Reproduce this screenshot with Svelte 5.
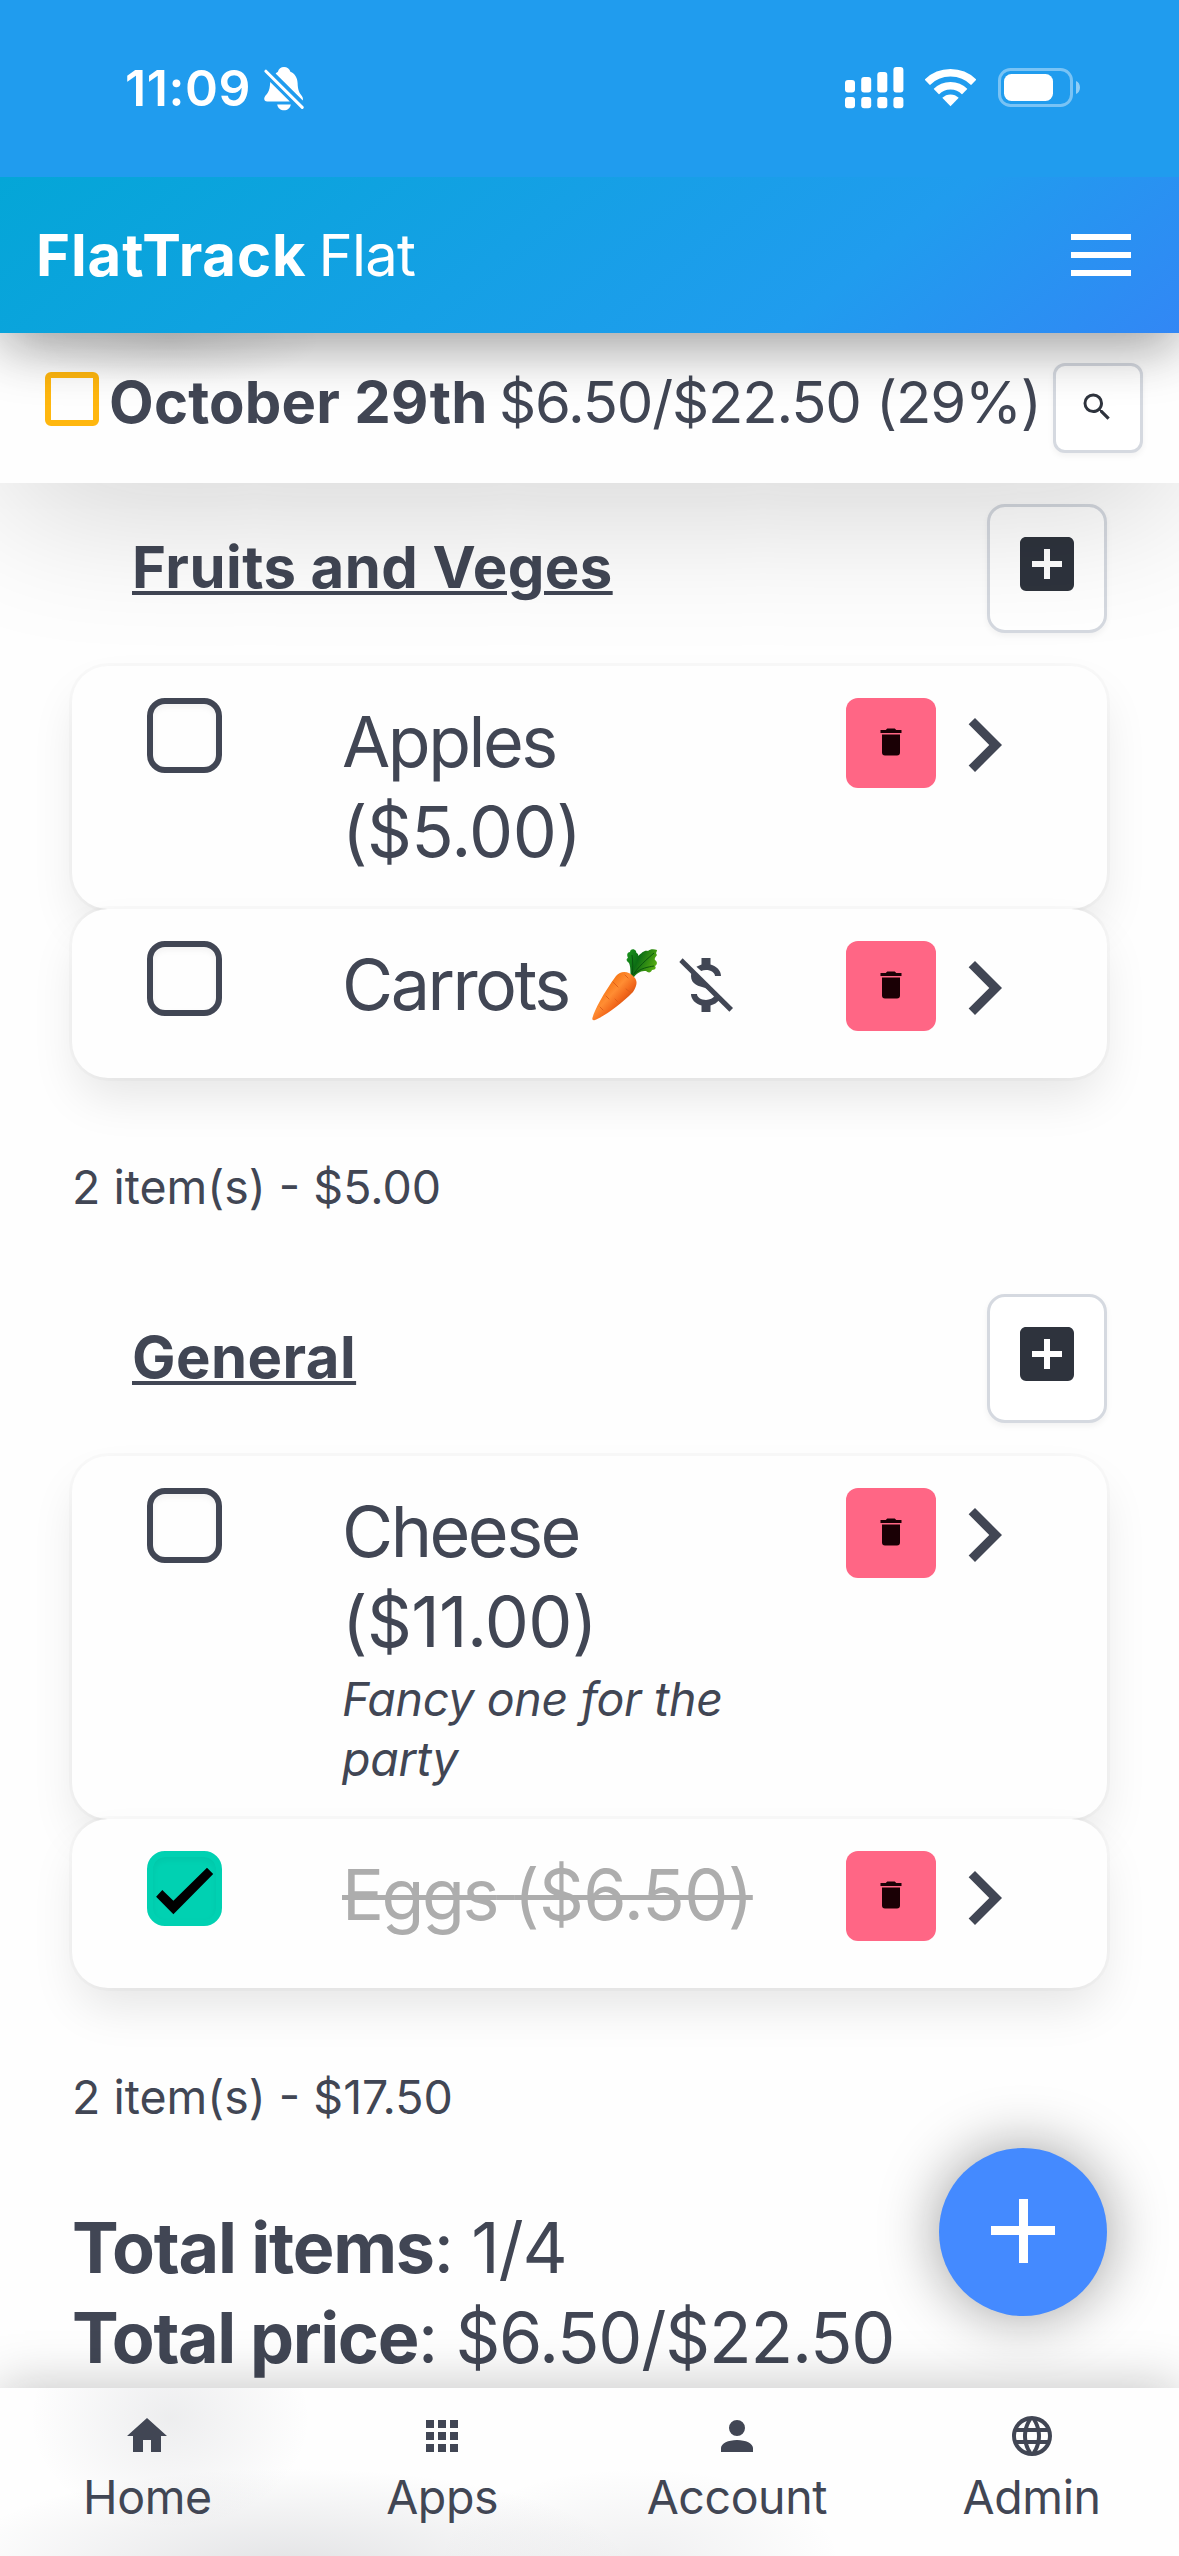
<script>
  const sections = [
    {
      name: 'Fruits and Veges',
      total: '2 item(s) - $5.00',
      items: [
        { name: 'Apples', price: '($5.00)' },
        { name: 'Carrots', carrot: true, unpriced: true }
      ]
    },
    {
      name: 'General',
      total: '2 item(s) - $17.50',
      items: [
        { name: 'Cheese', price: '($11.00)', note: 'Fancy one for the party' },
        { name: 'Eggs', price: '($6.50)', done: true }
      ]
    }
  ];

  const tabs = [
    { label: 'Home', icon: 'M10,20V14H14V20H19V12H22L12,3L2,12H5V20H10Z' },
    {
      label: 'Apps',
      icon: 'M16,20H20V16H16M16,14H20V10H16M10,8H14V4H10M16,8H20V4H16M10,14H14V10H10M4,14H8V10H4M4,20H8V16H4M10,20H14V16H10M4,8H8V4H4V8Z'
    },
    {
      label: 'Account',
      icon: 'M12,4A4,4 0 0,1 16,8A4,4 0 0,1 12,12A4,4 0 0,1 8,8A4,4 0 0,1 12,4M12,14C16.42,14 20,15.79 20,18V20H4V18C4,15.79 7.58,14 12,14Z'
    },
    {
      label: 'Admin',
      icon: 'M16.36,14C16.44,13.34 16.5,12.68 16.5,12C16.5,11.32 16.44,10.66 16.36,10H19.74C19.9,10.64 20,11.31 20,12C20,12.69 19.9,13.36 19.74,14M14.59,19.56C15.19,18.45 15.65,17.25 15.97,16H18.92C17.96,17.65 16.43,18.93 14.59,19.56M14.34,14H9.66C9.56,13.34 9.5,12.68 9.5,12C9.5,11.32 9.56,10.65 9.66,10H14.34C14.43,10.65 14.5,11.32 14.5,12C14.5,12.68 14.43,13.34 14.34,14M12,19.96C11.17,18.76 10.5,17.43 10.09,16H13.91C13.5,17.43 12.83,18.76 12,19.96M8,8H5.08C6.03,6.34 7.57,5.06 9.4,4.44C8.8,5.55 8.35,6.75 8,8M5.08,16H8C8.35,17.25 8.8,18.45 9.4,19.56C7.57,18.93 6.03,17.65 5.08,16M4.26,14C4.1,13.36 4,12.69 4,12C4,11.31 4.1,10.64 4.26,10H7.64C7.56,10.66 7.5,11.32 7.5,12C7.5,12.68 7.56,13.34 7.64,14M12,4.03C12.83,5.23 13.5,6.57 13.91,8H10.09C10.5,6.57 11.17,5.23 12,4.03M18.92,8H15.97C15.65,6.75 15.19,5.55 14.59,4.44C16.43,5.07 17.96,6.34 18.92,8M12,2C6.47,2 2,6.5 2,12A10,10 0 0,0 12,22A10,10 0 0,0 22,12A10,10 0 0,0 12,2Z'
    }
  ];
</script>

<div class="screen">
  <div class="status">
    <span class="time">11:09</span>
    <svg class="bell" viewBox="0 0 40 44">
      <path d="M20 0C23 0 25.6 2 26.4 4.8C31 6.6 33.4 11 33.6 16C33.8 22.5 35 25.5 37.5 28.5C38.8 30 39.2 31.5 38.8 33.4L11.6 6.6C12.6 5.8 13 5.4 13.9 4.8C14.6 2 17 0 20 0Z" />
      <path d="M6.2 15L25.8 34.6H3.2C1.2 34.6 .2 33.4 .2 31.8C.2 29.6 2.2 28 3.6 26C5.5 23.5 6 19.5 6.2 15Z" />
      <path d="M13.2 37.4H26.8C26.2 41.2 23.4 43.2 20 43.2S13.8 41.2 13.2 37.4Z" />
      <path d="M1.9 4.2L38.2 40.4" class="bell-slash" />
    </svg>
    <div class="indicators">
      <svg class="signal" viewBox="0 0 59 42">
        <rect x="0" y="13" width="10" height="12.4" rx="3" />
        <rect x="16.2" y="10" width="10" height="15.4" rx="3" />
        <rect x="32.3" y="5" width="10" height="20.4" rx="3" />
        <rect x="48.4" y="0" width="10" height="25.4" rx="3" />
        <rect x="0" y="30" width="10" height="11.2" rx="3" />
        <rect x="16.2" y="30" width="10" height="11.2" rx="3" />
        <rect x="32.3" y="30" width="10" height="11.2" rx="3" />
        <rect x="48.4" y="30" width="10" height="11.2" rx="3" />
      </svg>
      <svg class="wifi" viewBox="0 0 51 38">
        <clipPath id="fan"><path d="M25.5 37.2L-12 -1.2H63Z" /></clipPath>
        <g clip-path="url(#fan)">
          <circle cx="25.5" cy="37" r="33.2" class="arc" />
          <circle cx="25.5" cy="37" r="20.2" class="arc" />
          <circle cx="25.5" cy="37" r="11.5" />
        </g>
      </svg>
      <svg class="battery" viewBox="0 0 83 39">
        <rect x="1.5" y="1.5" width="72" height="36" rx="11" class="shell" />
        <rect x="6" y="6" width="49" height="27" rx="7.5" />
        <path d="M78 13C80.6 14 82 16.6 82 19.5S80.6 25 78 26Z" class="cap" />
      </svg>
    </div>
  </div>

  <nav class="navbar">
    <span class="brand"><b>FlatTrack</b><span class="flat">Flat</span></span>
    <span class="burger"><i></i><i></i><i></i></span>
  </nav>

  <header class="list-head">
    <span class="pending"></span>
    <b class="date">October 29th</b>
    <span class="spent">$6.50/$22.50 (29%)</span>
    <button class="search" aria-label="Search">
      <svg viewBox="0 0 24 24"><path d="M9.5,3A6.5,6.5 0 0,1 16,9.5C16,11.11 15.41,12.59 14.44,13.73L14.71,14H15.5L20.5,19L19,20.5L14,15.5V14.71L13.73,14.44C12.59,15.41 11.11,16 9.5,16A6.5,6.5 0 0,1 3,9.5A6.5,6.5 0 0,1 9.5,3M9.5,5C7,5 5,7 5,9.5C5,12 7,14 9.5,14C12,14 14,12 14,9.5C14,7 12,5 9.5,5Z" /></svg>
    </button>
  </header>

  <main>
    {#each sections as section}
      <section>
        <div class="section-head">
          <h2>{section.name}</h2>
          <button class="add" aria-label="Add item">
            <svg viewBox="0 0 24 24"><path d="M17,13H13V17H11V13H7V11H11V7H13V11H17M19,3H5C3.89,3 3,3.89 3,5V19A2,2 0 0,0 5,21H19A2,2 0 0,0 21,19V5C21,3.89 20.1,3 19,3Z" /></svg>
          </button>
        </div>
        {#each section.items as item}
          <article class="card">
            <span class="box" class:checked={item.done}>
              {#if item.done}
                <svg viewBox="0 0 75 75"><path d="M9.1 45.7L15.3 39L26.4 49.7L60 16.7L66.2 23L26.4 63.3Z" /></svg>
              {/if}
            </span>
            <div class="info">
              <div class="name" class:done={item.done}>
                <span>{item.name}</span>
                {#if item.price}<span class="price">{item.price}</span>{/if}
                {#if item.carrot}
                  <svg class="carrot" viewBox="0 0 65 72">
                    <defs>
                      <linearGradient id="root" x1="0.25" y1="0.25" x2="0.75" y2="0.75">
                        <stop offset="0" stop-color="#f5700f" />
                        <stop offset="0.4" stop-color="#ff8d33" />
                        <stop offset="0.7" stop-color="#f2671a" />
                        <stop offset="1" stop-color="#c94a12" />
                      </linearGradient>
                      <linearGradient id="leaf" x1="0" y1="0" x2="1" y2="0.4">
                        <stop offset="0" stop-color="#1d9a20" />
                        <stop offset="0.45" stop-color="#0c6d14" />
                        <stop offset="1" stop-color="#52a812" />
                      </linearGradient>
                    </defs>
                    <path d="M39 28C38 22 39 19 37 14C34 12 34 10 36 9C34 5 36 3 38 3C38 0 42 -1 44 2C44 5 47 4 46 7C50 4 52 1 56 2C58 0 62 0 65 1C65 3 63 4 65 6C64 8 62 9 63 11C66 13 65 16 63 17C65 20 62 21 60 21C59 24 56 24 54 22C49 22 46 23 42 28Z" fill="url(#leaf)" />
                    <path d="M40 28C41 20 41 12 40 6M41 26C46 18 54 11 62 4M42 25C49 19 56 18 62 17" fill="none" stroke="#07500e" stroke-width="0.9" />
                    <path d="M.4 69C3 60 11 45 24 27C29 21 37 22 42 28C46 32 45 37 41 43C29 55 13 67 3 71C1 71.6 0 71 .4 69Z" fill="url(#root)" />
                    <path d="M21 33L26 38M33 26L36 29M14 47L17 50M34 40L38 43M23 50L26 53M8 58L11 61" fill="none" stroke="#e0601a" stroke-width="1" stroke-linecap="round" />
                  </svg>
                {/if}
                {#if item.unpriced}
                  <svg class="no-price" viewBox="0 0 24 24">
                    <path d="M10.5 5.18V3H13.5V5.18C15.53 5.69 17 7.21 17 9H15C15 7.92 13.63 7 12 7C11.4 7 10.9 7.1 10.4 7.3L8.8 5.9Z" />
                    <path d="M7.1 8L14 14.3L11.8 12.98C9.64 12.44 7 11.78 7 9Z" />
                    <path d="M7 15H9C9 16.08 10.37 17 12 17C13.3 17 14.4 16.4 14.8 15.7L16.4 17C15.7 17.9 14.7 18.5 13.5 18.82V21H10.5V18.82C8.47 18.31 7 16.79 7 15Z" />
                    <path d="M4.2 3.1L21 19.7L19.8 20.9L3.1 4.3Z" />
                  </svg>
                {/if}
              </div>
              {#if item.note}<div class="note">{item.note}</div>{/if}
            </div>
            <button class="delete" aria-label="Delete">
              <svg viewBox="0 0 24 24"><path d="M19,4H15.5L14.5,3H9.5L8.5,4H5V6H19M6,19A2,2 0 0,0 8,21H16A2,2 0 0,0 18,19V7H6V19Z" /></svg>
            </button>
            <svg class="chevron" viewBox="0 0 24 24"><path d="M8.59,16.58L13.17,12L8.59,7.41L10,6L16,12L10,18L8.59,16.58Z" /></svg>
          </article>
        {/each}
        <p class="subtotal">{section.total}</p>
      </section>
    {/each}
    <div class="totals">
      <div><b>Total items</b>: 1/4</div>
      <div><b>Total price</b>: $6.50/$22.50</div>
    </div>
  </main>

  <footer>
    {#each tabs as tab}
      <a href="#{tab.label}">
        <svg viewBox="0 0 24 24"><path d={tab.icon} /></svg>
        <span>{tab.label}</span>
      </a>
    {/each}
  </footer>

  <button class="fab" aria-label="Add"><i></i></button>
</div>

<style>
  :global(body) {
    background: #fefefe;
  }
  .screen {
    position: relative;
    display: flex;
    flex-direction: column;
    width: 1179px;
    height: 2556px;
    overflow: hidden;
    background: #fefefe;
    color: #414654;
    font-family: Inter, 'Liberation Sans', sans-serif;
    font-size: 46.5px;
  }
  button {
    display: block;
    flex: none;
    margin: 0;
    padding: 0;
    font: inherit;
  }
  svg {
    display: block;
    flex: none;
    fill: currentColor;
  }
  b {
    font-weight: 700;
  }

  .status {
    display: flex;
    flex: none;
    height: 177px;
    box-sizing: border-box;
    padding: 57px 98px 0 125px;
    background: #209cee;
    color: #fff;
    position: relative;
    z-index: 4;
  }
  .time {
    width: 139px;
    font-size: 50px;
    font-weight: 600;
    letter-spacing: 0.6px;
    line-height: 62px;
  }
  .bell {
    width: 40px;
    height: 44px;
    margin-top: 10px;
  }
  .bell-slash {
    stroke: #fff;
    stroke-width: 3;
    stroke-linecap: round;
  }
  .indicators {
    display: flex;
    margin-left: auto;
    padding-top: 10px;
  }
  .signal {
    width: 59px;
    height: 42px;
  }
  .wifi {
    width: 51px;
    height: 38px;
    margin: 2px 22px 0 21px;
  }
  .arc {
    fill: none;
    stroke: #fff;
    stroke-width: 7.6;
  }
  .battery {
    width: 83px;
    height: 39px;
    margin-top: 1px;
  }
  .shell {
    fill: none;
    stroke: #fff;
    stroke-opacity: 0.4;
    stroke-width: 3;
  }
  .cap {
    fill-opacity: 0.5;
  }

  .navbar {
    display: flex;
    flex: none;
    justify-content: space-between;
    height: 156px;
    box-sizing: border-box;
    padding: 0 48px 0 36px;
    background: linear-gradient(141deg, #04a6d7 0%, #209cee 71%, #3287f5 100%);
    box-shadow: 0 24px 48px -6px rgba(10, 10, 10, 0.1), 0 10px 60px rgba(10, 10, 10, 0.33);
    color: #fff;
    position: relative;
    z-index: 3;
  }
  .brand {
    font-size: 58px;
    line-height: 156px;
  }
  .brand b {
    letter-spacing: 0.9px;
  }
  .flat {
    margin-left: 12px;
    font-weight: 400;
    letter-spacing: -0.8px;
  }
  .burger {
    display: grid;
    gap: 12px;
    align-content: start;
    padding-top: 57px;
  }
  .burger i {
    width: 60px;
    height: 6px;
    background: #fff;
  }

  .list-head {
    display: flex;
    flex: none;
    height: 150px;
    box-sizing: border-box;
    padding: 30px 36px 0 45px;
    background: radial-gradient(ellipse 150px 45px at 170px 8px, rgba(10, 10, 10, 0.08), transparent), #fefefe;
    box-shadow: 0 24px 150px -6px rgba(10, 10, 10, 0.2);
    font-size: 58px;
    line-height: 78px;
    white-space: nowrap;
    position: relative;
    z-index: 2;
  }
  .pending {
    width: 42px;
    height: 42px;
    margin-top: 9px;
    border: 6px solid #ffb70f;
    border-radius: 6px;
  }
  .date {
    width: 390px;
    margin-left: 10px;
    letter-spacing: 0.2px;
  }
  .spent {
    letter-spacing: -1.15px;
  }
  .search {
    width: 90px;
    height: 90px;
    margin-left: auto;
    padding: 0 0 3px 23px;
    border: 3px solid #d5d9e0;
    border-radius: 12px;
    background: #fff;
    color: #2e333d;
    box-shadow: 0 3px 6px rgba(10, 10, 10, 0.05);
  }
  .search svg {
    width: 36px;
    height: 36px;
  }

  main {
    flex: 1;
    min-height: 0;
    padding: 0 72px;
  }
  .section-head {
    display: flex;
    justify-content: space-between;
    margin-bottom: 33px;
    padding: 21px 0 0 60px;
  }
  section + section .section-head {
    padding-top: 77px;
  }
  h2 {
    margin: 0;
    font-size: 58px;
    font-weight: 700;
    letter-spacing: 0.45px;
    line-height: 126px;
    text-decoration: underline;
    text-decoration-thickness: 4px;
    text-underline-offset: 3px;
  }
  .add {
    width: 120px;
    height: 129px;
    padding: 0 0 9px 21px;
    border: 3px solid #d5d9e0;
    border-radius: 18px;
    background: #fff;
    color: #2e333d;
    box-shadow: 0 3px 6px rgba(10, 10, 10, 0.05);
  }
  .add svg {
    width: 72px;
    height: 72px;
  }

  .card {
    display: flex;
    align-items: flex-start;
    min-height: 169px;
    box-sizing: border-box;
    padding: 32px 0 32px 75px;
    border-radius: 36px;
    background: #fefefe;
    box-shadow: 0 24px 48px -6px rgba(10, 10, 10, 0.1), 0 0 0 3px rgba(10, 10, 10, 0.02);
  }
  .box {
    flex: none;
    width: 75px;
    height: 75px;
    box-sizing: border-box;
    border: 6px solid #414654;
    border-radius: 18px;
    box-shadow: inset 0 3px 6px rgba(10, 10, 10, 0.05);
  }
  .checked {
    border-color: #00d1b2;
    background: #00d1b2;
    color: #000;
  }
  .checked svg {
    width: 75px;
    height: 75px;
    margin: -6px;
  }
  .info {
    width: 430px;
    margin: -1px 74px 0 120px;
  }
  .name {
    font-size: 70px;
    line-height: 90px;
    letter-spacing: -2.5px;
  }
  .price {
    letter-spacing: -0.6px;
  }
  .done {
    color: #adadad;
    text-decoration: line-through;
    text-decoration-thickness: 5px;
  }
  .name svg {
    display: inline-block;
    vertical-align: top;
    margin-top: 9px;
    height: 72px;
  }
  .carrot {
    width: 65px;
    margin-left: 6px;
  }
  .no-price {
    width: 72px;
    margin-left: -4px;
  }
  .note {
    margin: 2px 0 -2px;
    font-style: italic;
    letter-spacing: -0.3px;
    line-height: 60px;
  }
  .delete {
    width: 90px;
    height: 90px;
    padding: 0 0 3px 27px;
    border: 0;
    border-radius: 12px;
    background: #ff6685;
    color: #1a0005;
  }
  .delete svg {
    width: 36px;
    height: 36px;
  }
  .chevron {
    width: 108px;
    height: 108px;
    margin: -7px 0 -3px -6px;
  }
  .subtotal {
    margin: 79px 0 0;
    line-height: 60px;
  }
  .totals {
    margin-top: 76px;
    font-size: 70px;
    letter-spacing: -1.2px;
    line-height: 90px;
    white-space: nowrap;
  }
  .totals div + div b {
    letter-spacing: -1.4px;
  }

  footer {
    display: grid;
    grid-template-columns: repeat(4, 1fr);
    flex: none;
    height: 168px;
    background:
      radial-gradient(ellipse 140px 110px at 170px 30px, rgba(65, 70, 84, 0.09), transparent),
      radial-gradient(ellipse 340px 100px at 290px 180px, rgba(65, 70, 84, 0.15), transparent),
      radial-gradient(ellipse 200px 90px at 640px 170px, rgba(65, 70, 84, 0.08), transparent),
      #fefefe;
    box-shadow: 0 0 50px rgba(10, 10, 10, 0.25);
    position: relative;
    z-index: 2;
  }
  footer a {
    display: flex;
    flex-direction: column;
    align-items: center;
    padding-top: 24px;
    color: inherit;
    text-decoration: none;
  }
  footer svg {
    width: 48px;
    height: 48px;
  }
  footer span {
    margin-top: 7px;
    letter-spacing: -0.4px;
    line-height: 60px;
  }

  .fab {
    position: absolute;
    left: 939px;
    top: 2148px;
    display: grid;
    place-items: center;
    width: 168px;
    height: 168px;
    padding-bottom: 3px;
    border: 0;
    border-radius: 50%;
    background: #448aff;
    box-shadow: 0 0 60px rgba(10, 10, 10, 0.4);
  }
  .fab i {
    width: 64px;
    height: 64px;
    background: linear-gradient(#fff, #fff) center / 64px 9px no-repeat, linear-gradient(#fff, #fff) center / 9px 64px no-repeat;
  }
</style>
